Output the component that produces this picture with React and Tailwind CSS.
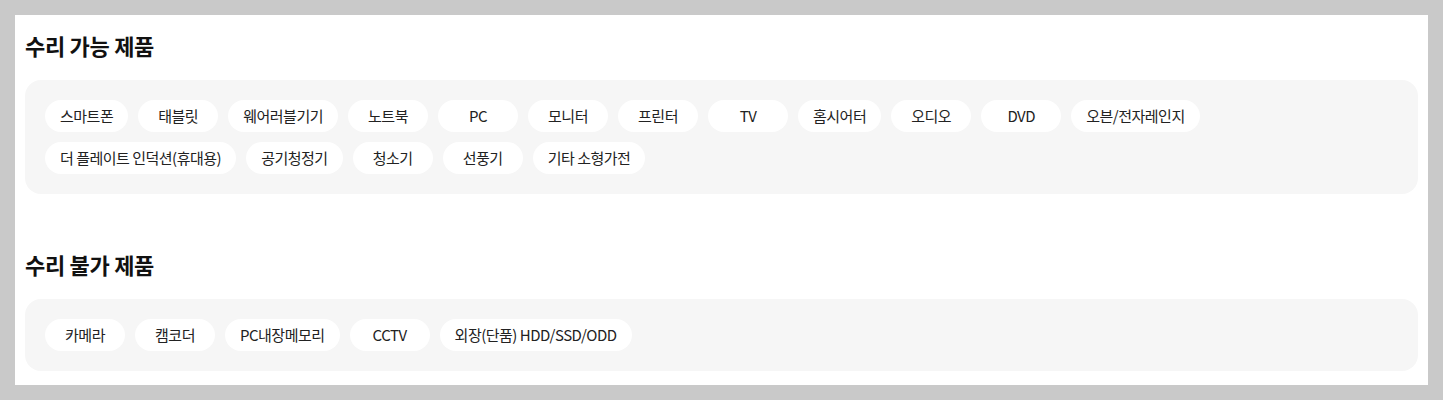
const available = [
  "스마트폰",
  "태블릿",
  "웨어러블기기",
  "노트북",
  "PC",
  "모니터",
  "프린터",
  "TV",
  "홈시어터",
  "오디오",
  "DVD",
  "오븐/전자레인지",
  "더 플레이트 인덕션(휴대용)",
  "공기청정기",
  "청소기",
  "선풍기",
  "기타 소형가전",
];

const unavailable = ["카메라", "캠코더", "PC내장메모리", "CCTV", "외장(단품) HDD/SSD/ODD"];

const Chip = ({ label }) => (
  <span className="inline-flex h-[32px] min-w-[80px] items-center justify-center rounded-full bg-white px-[15px] text-[15px] tracking-[-0.5px] text-[#222] whitespace-nowrap">
    {label}
  </span>
);

const Section = ({ title, items }) => (
  <section>
    <h2 className="mb-[20px] h-[30px] text-[22px] leading-[30px] font-bold tracking-[-0.3px] text-[#111]">
      {title}
    </h2>
    <div className="flex flex-wrap gap-[10px] rounded-[16px] bg-[#f6f6f6] p-[20px]">
      {items.map((item) => (
        <Chip key={item} label={item} />
      ))}
    </div>
  </section>
);

export default function App() {
  return (
    <div
      className="min-h-[400px] bg-[#c9c9c9] px-[15px] pt-[15px] pb-[15px]"
      style={{ fontFamily: '"Noto Sans CJK KR", "Noto Sans", sans-serif' }}
    >
      <div className="flex flex-col gap-[55px] bg-white px-[10px] pt-[15px] pb-[14px]">
        <Section title="수리 가능 제품" items={available} />
        <Section title="수리 불가 제품" items={unavailable} />
      </div>
    </div>
  );
}
